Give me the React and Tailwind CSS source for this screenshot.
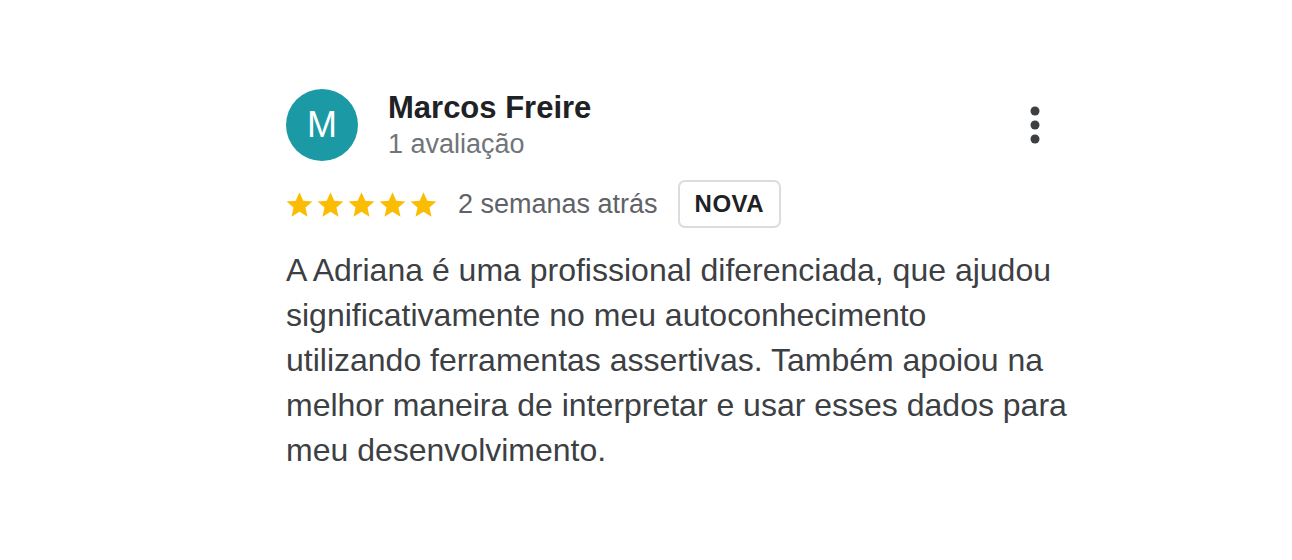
function Star() {
  return (
    <svg viewBox="0 0 24 24" className="w-[31px] h-[31px]" fill="#fbbc04">
      <path d="M12 2.5l2.9 6.6 7.1.6-5.4 4.7 1.6 7-6.2-3.7-6.2 3.7 1.6-7L2 9.7l7.1-.6z" />
    </svg>
  );
}

function Kebab() {
  return (
    <svg viewBox="0 0 12 40" className="w-[12px] h-[40px]" fill="#3c4043">
      <circle cx="6" cy="6" r="4.5" />
      <circle cx="6" cy="20" r="4.5" />
      <circle cx="6" cy="34" r="4.5" />
    </svg>
  );
}

export default function App() {
  const lines = [
    "A Adriana é uma profissional diferenciada, que ajudou",
    "significativamente no meu autoconhecimento",
    "utilizando ferramentas assertivas. Também apoiou na",
    "melhor maneira de interpretar e usar esses dados para",
    "meu desenvolvimento.",
  ];

  return (
    <main className="w-full h-[560px] bg-white font-['Liberation_Sans',Arial,sans-serif]">
      <div className="pl-[286px] pt-[89px] w-[1080px]">
        {/* header */}
        <div className="flex items-start">
          <div className="w-[72px] h-[72px] rounded-full bg-[#1b9aa5] flex items-center justify-center text-white text-[36px] leading-none">
            M
          </div>
          <div className="ml-[30px] flex-1">
            <div className="text-[31px] leading-[38px] font-bold text-[#202124]">Marcos Freire</div>
            <div className="text-[27px] leading-[34px] text-[#70757a]">1 avaliação</div>
          </div>
          <div className="mt-[16px] mr-[39px]">
            <Kebab />
          </div>
        </div>

        {/* rating row */}
        <div className="flex items-center mt-[19px]">
          <div className="flex -ml-[2px]">
            <Star />
            <Star />
            <Star />
            <Star />
            <Star />
          </div>
          <span className="ml-[19px] text-[27px] text-[#5f6368]">2 semanas atrás</span>
          <span className="ml-[20px] h-[48px] px-[15px] flex items-center border-2 border-[#dadce0] rounded-[7px] text-[24px] font-bold text-[#202124] tracking-[0.5px]">
            NOVA
          </span>
        </div>

        {/* body */}
        <p className="mt-[20px] text-[32px] leading-[45px] text-[#3c4043]">
          {lines.map((l, i) => (
            <span key={i} className="block whitespace-nowrap">
              {l}
            </span>
          ))}
        </p>
      </div>
    </main>
  );
}
